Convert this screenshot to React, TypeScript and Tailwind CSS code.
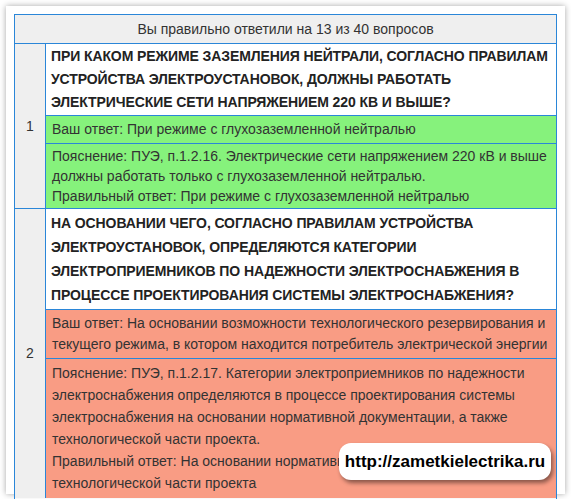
export default function App() {
  const cell = "border-t border-[#2a86d8] px-[6px]";
  return (
    <div className="w-[571px] h-[499px] bg-white overflow-hidden relative" style={{ fontFamily: '"Liberation Sans", Arial, sans-serif' }}>
      <div className="absolute left-[6px] top-[6px] w-[559px] h-[488px] shadow-[0_0_6px_rgba(0,0,0,0.35)] bg-white" />
      <div className="relative ml-[14px] mt-[14px] w-[543px] border border-[#2a86d8] border-b-0 text-[14px] text-[#333] overflow-hidden h-[485px]">
        <div className="h-[28px] bg-[#efefef] flex items-center justify-center">Вы правильно ответили на 13 из 40 вопросов</div>
        <div className="flex border-t border-[#2a86d8]">
          <div className="w-[30px] shrink-0 bg-[#efefef] flex items-center justify-center">1</div>
          <div className="flex-1 border-l border-[#2a86d8]">
            <div className="px-[5px] py-[1px] font-bold leading-[23px] text-[#222] tracking-[-0.1px]">ПРИ КАКОМ РЕЖИМЕ ЗАЗЕМЛЕНИЯ НЕЙТРАЛИ, СОГЛАСНО ПРАВИЛАМ УСТРОЙСТВА ЭЛЕКТРОУСТАНОВОК, ДОЛЖНЫ РАБОТАТЬ ЭЛЕКТРИЧЕСКИЕ СЕТИ НАПРЯЖЕНИЕМ 220 КВ И ВЫШЕ?</div>
            <div className={`${cell} bg-[#86f27c] h-[28px] flex items-center`}>Ваш ответ: При режиме с глухозаземленной нейтралью</div>
            <div className={`${cell} bg-[#86f27c] leading-[20px] py-[2px]`}>Пояснение: ПУЭ, п.1.2.16. Электрические сети напряжением 220 кВ и выше должны работать только с глухозаземленной нейтралью.<br />Правильный ответ: При режиме с глухозаземленной нейтралью</div>
          </div>
        </div>
        <div className="flex border-t border-[#2a86d8]">
          <div className="w-[30px] shrink-0 bg-[#efefef] flex items-center justify-center">2</div>
          <div className="flex-1 border-l border-[#2a86d8]">
            <div className="px-[5px] py-[2px] font-bold leading-[24px] text-[#222] tracking-[-0.1px]">НА ОСНОВАНИИ ЧЕГО, СОГЛАСНО ПРАВИЛАМ УСТРОЙСТВА ЭЛЕКТРОУСТАНОВОК, ОПРЕДЕЛЯЮТСЯ КАТЕГОРИИ ЭЛЕКТРОПРИЕМНИКОВ ПО НАДЕЖНОСТИ ЭЛЕКТРОСНАБЖЕНИЯ В ПРОЦЕССЕ ПРОЕКТИРОВАНИЯ СИСТЕМЫ ЭЛЕКТРОСНАБЖЕНИЯ?</div>
            <div className={`${cell} bg-[#f99c84] leading-[21px] py-[3px]`}>Ваш ответ: На основании возможности технологического резервирования и текущего режима, в котором находится потребитель электрической энергии</div>
            <div className={`${cell} bg-[#f99c84] leading-[22px] py-[3px] h-[140px]`}>Пояснение: ПУЭ, п.1.2.17. Категории электроприемников по надежности электроснабжения определяются в процессе проектирования системы электроснабжения на основании нормативной документации, а также технологической части проекта.<br />Правильный ответ: На основании нормативной документации, а также технологической части проекта</div>
          </div>
        </div>
      </div>
      <div className="absolute left-[339px] top-[443px] w-[212px] h-[37px] bg-white rounded-[12px] shadow-[2px_3px_4px_rgba(0,0,0,0.45)] flex items-center justify-center font-bold text-[17px] text-black">http://zametkielectrika.ru</div>
    </div>
  );
}
